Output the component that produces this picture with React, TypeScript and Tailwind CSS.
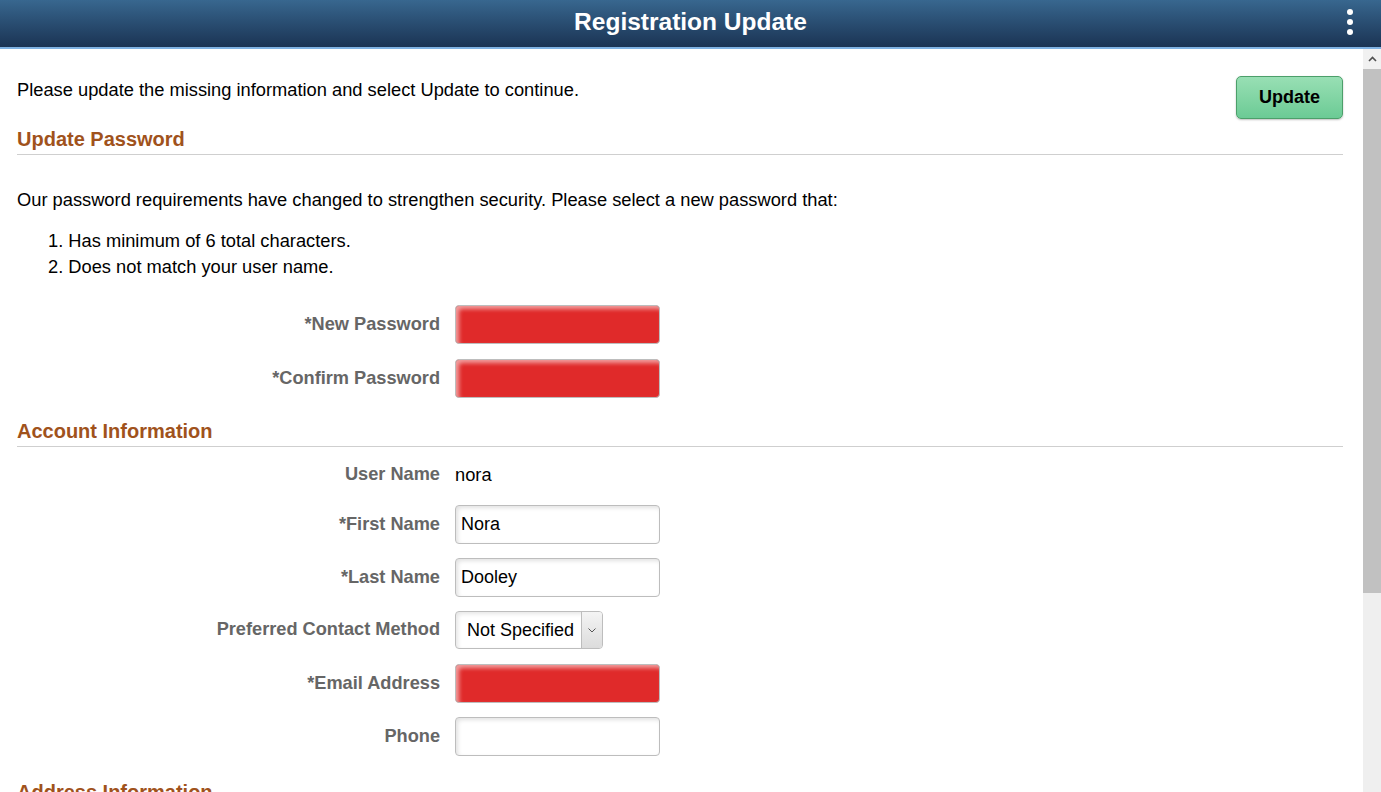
import type { ReactNode } from "react";

const font = { fontFamily: '"Liberation Sans", Arial, sans-serif' };

function SectionTitle({ children, className = "" }: { children: ReactNode; className?: string }) {
  return (
    <h2
      className={`border-b border-[#cfcfcf] pb-[4px] text-[20px] font-bold leading-[22px] text-[#a0521c] ${className}`}
    >
      {children}
    </h2>
  );
}

function Row({ label, children, className = "" }: { label: string; children: ReactNode; className?: string }) {
  return (
    <div className={`flex items-center ${className}`}>
      <div className="w-[423px] text-right text-[18.2px] font-bold text-[#666666]">{label}</div>
      <div className="ml-[15px] flex items-center">{children}</div>
    </div>
  );
}

function TextInput({ value = "", error = false }: { value?: string; error?: boolean }) {
  return (
    <div
      className={
        error
          ? "h-[39px] w-[205px] rounded-[4px] border border-[#bdbdbd] bg-[#e02a2a] shadow-[inset_3px_3px_4px_rgba(255,255,255,0.55)]"
          : "flex h-[39px] w-[205px] items-center rounded-[4px] border border-[#bdbdbd] bg-white pl-[5px] text-[18px] text-black shadow-[inset_2px_2px_4px_rgba(0,0,0,0.12)]"
      }
    >
      {!error && value}
    </div>
  );
}

function SelectBox({ value }: { value: string }) {
  return (
    <div className="flex h-[38px] w-[148px] overflow-hidden rounded-[4px] border border-[#bdbdbd] bg-white shadow-[inset_2px_2px_4px_rgba(0,0,0,0.1)]">
      <div className="flex flex-1 items-center whitespace-nowrap pl-[11px] text-[18px] text-black">{value}</div>
      <div className="flex w-[21px] shrink-0 items-center justify-center border-l border-[#bdbdbd] bg-gradient-to-b from-[#f4f4f4] to-[#dcdcdc]">
        <svg width="8" height="5" viewBox="0 0 8 5" fill="none">
          <path d="M0.5 0.5 L4 4 L7.5 0.5" stroke="#555" strokeWidth="1" />
        </svg>
      </div>
    </div>
  );
}

export default function App() {
  return (
    <div className="flex h-[792px] w-[1381px] flex-col overflow-hidden bg-white text-black" style={font}>
      <header className="relative flex h-[49px] shrink-0 items-center justify-center border-b-2 border-[#7fb2e3] bg-gradient-to-b from-[#38678f] to-[#1b3454] pb-[2px]">
        <h1 className="text-[24.5px] font-bold leading-none text-white">Registration Update</h1>
        <div className="absolute right-[28px] top-[9px] flex flex-col gap-[4px]">
          <span className="h-[6px] w-[6px] rounded-full bg-white" />
          <span className="h-[6px] w-[6px] rounded-full bg-white" />
          <span className="h-[6px] w-[6px] rounded-full bg-white" />
        </div>
      </header>

      <div className="flex min-h-0 flex-1">
        <main className="flex-1 overflow-hidden pl-[17px] pr-[20px]">
          <div className="mt-[27px] flex items-start justify-between">
            <p className="mt-[4px] text-[18.3px] leading-[20px]">
              Please update the missing information and select Update to continue.
            </p>
            <button className="h-[43px] w-[107px] rounded-[5px] border border-[#4c9f6a] bg-gradient-to-b from-[#98dfb4] to-[#6bcb95] text-[18px] font-bold text-black shadow-[0_1px_2px_rgba(0,0,0,0.25)]">
              Update
            </button>
          </div>

          <SectionTitle className="mt-[9px]">Update Password</SectionTitle>

          <p className="mt-[35px] text-[18.3px] leading-[20px]">
            Our password requirements have changed to strengthen security. Please select a new password that:
          </p>
          <ol className="mt-[18px] pl-[31px] text-[18.3px] leading-[26px]">
            <li>1. Has minimum of 6 total characters.</li>
            <li>2. Does not match your user name.</li>
          </ol>

          <div className="mt-[25px] flex flex-col gap-[15px]">
            <Row label="*New Password">
              <TextInput error />
            </Row>
            <Row label="*Confirm Password">
              <TextInput error />
            </Row>
          </div>

          <SectionTitle className="mt-[22px]">Account Information</SectionTitle>

          <div className="mt-[9px] flex flex-col">
            <Row label="User Name" className="h-[38px]">
              <span className="text-[18.3px]">nora</span>
            </Row>
            <Row label="*First Name" className="mt-[11px]">
              <TextInput value="Nora" />
            </Row>
            <Row label="*Last Name" className="mt-[14px]">
              <TextInput value="Dooley" />
            </Row>
            <Row label="Preferred Contact Method" className="mt-[14px]">
              <SelectBox value="Not Specified" />
            </Row>
            <Row label="*Email Address" className="mt-[15px]">
              <TextInput error />
            </Row>
            <Row label="Phone" className="mt-[14px]">
              <TextInput />
            </Row>
          </div>

          <SectionTitle className="mt-[25px]">Address Information</SectionTitle>
        </main>

        <div className="flex w-[18px] shrink-0 flex-col bg-[#efefef]">
          <div className="flex h-[20px] items-center justify-center bg-[#f1f1f1]">
            <svg width="9" height="6" viewBox="0 0 9 6" fill="none">
              <path d="M1 5 L4.5 1.5 L8 5" stroke="#505050" strokeWidth="1.6" />
            </svg>
          </div>
          <div className="h-[524px] bg-[#c1c1c1]" />
        </div>
      </div>
    </div>
  );
}
